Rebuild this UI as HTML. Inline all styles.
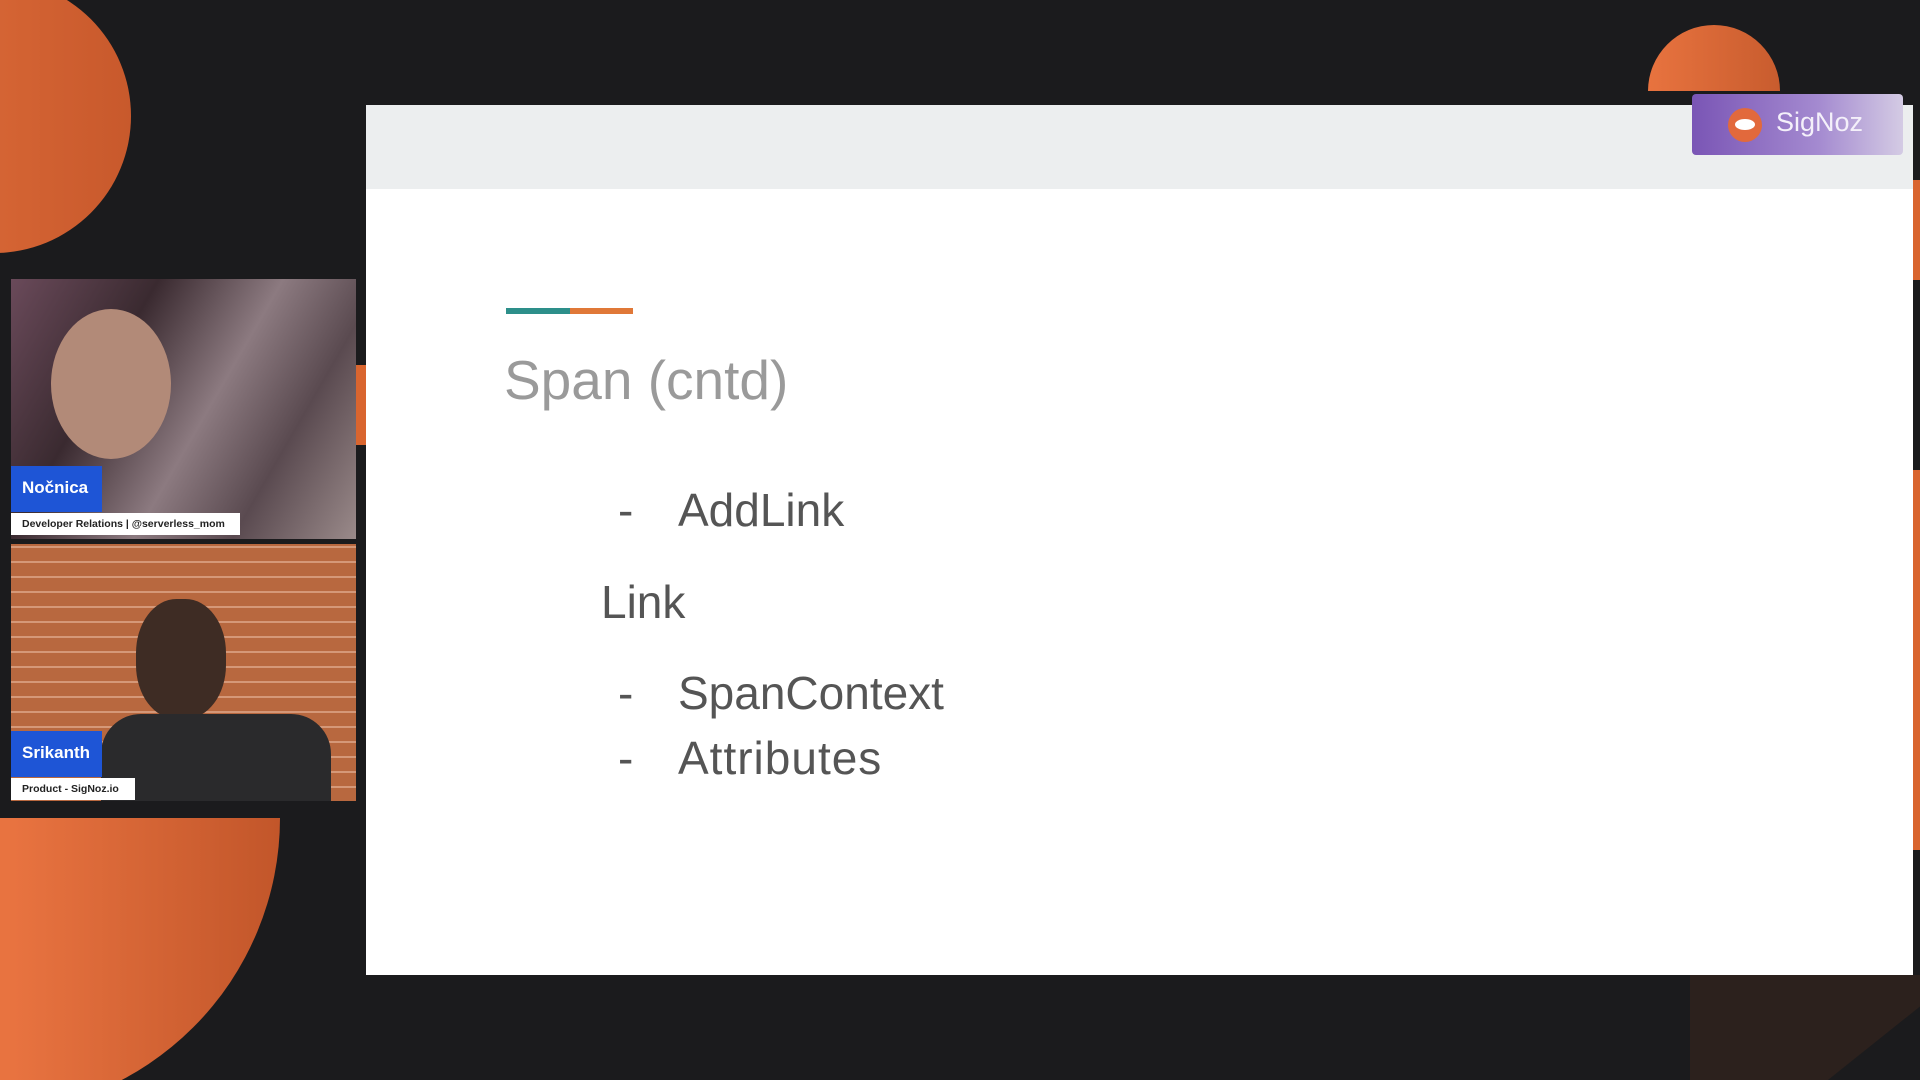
<!DOCTYPE html>
<html><head><meta charset="utf-8"><style>
*{margin:0;padding:0;box-sizing:border-box}
html{width:1920px;height:1080px;overflow:hidden}
body{width:1920px;height:1080px;background:#1b1b1d;position:relative;overflow:hidden;font-family:"Liberation Sans",sans-serif}
.abs{position:absolute}
.slide{left:366px;top:105px;width:1547px;height:870px;background:#fff}
.hdr{left:0;top:0;width:100%;height:84px;background:#eceeef}
.t{color:#555;font-size:46px;position:absolute}
</style></head><body>
<div class="abs" style="left:-143px;top:-21px;width:274px;height:274px;border-radius:50%;background:linear-gradient(90deg,#e2703c,#c8592c);clip-path:inset(21px 0 0 143px)"></div>
<div class="abs" style="left:1648px;top:25px;width:132px;height:132px;border-radius:50%;background:linear-gradient(90deg,#e8733f,#c85c2e);clip-path:inset(0 0 50% 0)"></div>
<div class="abs" style="left:-312px;top:522px;width:592px;height:592px;border-radius:50%;background:linear-gradient(90deg,#e87340 55%,#c2562a);clip-path:inset(50% 0 34px 312px)"></div>
<div class="abs" style="left:1690px;top:975px;width:230px;height:105px;background:#2c211d;clip-path:polygon(0 0,100% 0,100% 30%,60% 100%,0 100%)"></div>
<div class="abs" style="left:1913px;top:180px;width:7px;height:100px;background:#d9652f"></div>
<div class="abs" style="left:1913px;top:470px;width:7px;height:380px;background:#d9652f"></div>
<div class="abs" style="left:356px;top:365px;width:10px;height:80px;background:#d9652f"></div>
<div class="abs slide"><div class="abs hdr"></div>
<div class="abs" style="left:140px;top:203px;width:64px;height:6px;background:#2d8f8a"></div>
<div class="abs" style="left:204px;top:203px;width:63px;height:6px;background:#e07838"></div>
<div class="abs" style="left:138px;top:243px;font-size:55px;color:#9a9a9a">Span (cntd)</div>
<div class="t" style="left:252px;top:378px">-</div><div class="t" style="left:312px;top:378px">AddLink</div>
<div class="t" style="left:235px;top:470px">Link</div>
<div class="t" style="left:252px;top:561px">-</div><div class="t" style="left:312px;top:561px">SpanContext</div>
<div class="t" style="left:252px;top:626px;">-</div><div class="t" style="left:312px;top:626px;letter-spacing:1px">Attributes</div>
</div>
<div class="abs" style="left:1692px;top:94px;width:211px;height:61px;border-radius:4px;background:linear-gradient(90deg,#7a55b5,#a48ad0 60%,#d4cbe4)">
<div class="abs" style="left:36px;top:14px;width:34px;height:34px;border-radius:50%;background:#e2693c"></div>
<div class="abs" style="left:43px;top:25px;width:20px;height:11px;border-radius:50%;background:#fff"></div>
<div class="abs" style="left:84px;top:13px;font-size:27px;color:#f4f0fa">SigNoz</div></div>
<div class="abs" style="left:11px;top:279px;width:345px;height:260px;background:linear-gradient(120deg,#6a4a5a 0%,#3a2a30 30%,#8c7a80 55%,#5a4a50 75%,#9a8a8a 100%)">
<div class="abs" style="left:40px;top:30px;width:120px;height:150px;border-radius:50%;background:#b28a78"></div>
<div class="abs" style="left:0;top:187px;width:91px;height:46px;background:#1e55d6;color:#fff;font-weight:bold;font-size:17px;padding:12px 0 0 11px">Nočnica</div>
<div class="abs" style="left:0;top:234px;width:229px;height:22px;background:#fff;color:#222;font-weight:bold;font-size:10.5px;padding:5px 0 0 11px">Developer Relations | @serverless_mom</div></div>
<div class="abs" style="left:11px;top:544px;width:345px;height:257px;background:repeating-linear-gradient(0deg,#b8683f 0 13px,#d59878 13px 15px),#b8683f">
<div class="abs" style="left:125px;top:55px;width:90px;height:120px;border-radius:45%;background:#3e2c24"></div>
<div class="abs" style="left:90px;top:170px;width:230px;height:87px;border-radius:40px 40px 0 0;background:#2a2a2c"></div>
<div class="abs" style="left:0;top:187px;width:91px;height:46px;background:#1e55d6;color:#fff;font-weight:bold;font-size:17px;padding:12px 0 0 11px">Srikanth</div>
<div class="abs" style="left:0;top:234px;width:124px;height:22px;background:#fff;color:#222;font-weight:bold;font-size:10.5px;padding:5px 0 0 11px">Product - SigNoz.io</div></div>
</body></html>
